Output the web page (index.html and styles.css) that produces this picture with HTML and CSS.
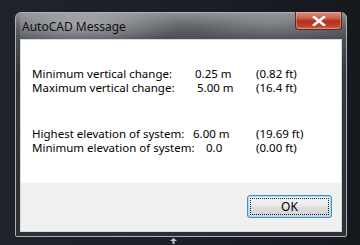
FILE: index.html
```html
<!DOCTYPE html>
<html lang="en">
    <head>
        <meta charset="UTF-8">
        <title>AutoCAD Message</title>
        <link rel="stylesheet" href="styles.css">
    </head>
    <body>
        <div class="window">
            <div class="titlebar">
                <span class="title">AutoCAD Message</span>
                <div class="close">
                    <svg width="14" height="10" viewBox="0 0 14 10">
                        <path d="M2 1 L12 9 M12 1 L2 9" stroke="#fff" stroke-width="2.6" stroke-linecap="square"/>
                    </svg>
                </div>
            </div>
            <div class="client">
                <div class="message">
                    <div class="group">
                        <span class="label">Minimum vertical change:</span><span class="value v1">0.25 m</span><span class="feet">(0.82 ft)</span>
                        <span class="label">Maximum vertical change:</span><span class="value v2">5.00 m</span><span class="feet">(16.4 ft)</span>
                    </div>
                    <div class="group second">
                        <span class="label">Highest elevation of system:</span><span class="value v3">6.00 m</span><span class="feet">(19.69 ft)</span>
                        <span class="label">Minimum elevation of system:</span><span class="value v4">0.0</span><span class="feet">(0.00 ft)</span>
                    </div>
                </div>
                <div class="buttons">
                    <button class="btn"><span class="focus">OK</span></button>
                </div>
            </div>
        </div>
        <div class="cursor">
            <svg width="7" height="6" viewBox="0 0 7 6"><path d="M3.5 0 L7 3 L4.5 3 L4.5 6 L2.5 6 L2.5 3 L0 3 Z" fill="#c8c8c8"/></svg>
        </div>
    </body>
</html>
```

FILE: styles.css
```css
body{
    margin: 0;
    width: 360px;
    height: 245px;
    overflow: hidden;
    background: linear-gradient(to right, #1f242b, #1a1e25 60%, #15181d);
    font-family: "Noto Sans", "Liberation Sans", sans-serif;
    font-size: 11.5px;
    color: #000;
    padding: 12px 0 0 15px;
    box-sizing: border-box;
}
.window{
    width: 332px;
    height: 225px;
    border-radius: 6px 6px 2px 2px;
    background: linear-gradient(to bottom, #8e9093 0, #5f6266 14px, #4a4d52 27px, #34373c 60px, #2c2f34 100%);
    border: 1px solid #aeb0b3;
    box-sizing: border-box;
    padding: 0 4px 4px 4px;
    display: flex;
    flex-direction: column;
}
.titlebar{
    height: 26px;
    display: flex;
    align-items: flex-start;
    justify-content: space-between;
    background: radial-gradient(ellipse 100px 22px at 60px 12px, rgba(205,207,210,0.6), rgba(205,207,210,0) 100%),
                radial-gradient(ellipse 80px 20px at 250px 10px, rgba(170,172,175,0.35), rgba(170,172,175,0) 100%);
}
.title{
    font-size: 12px;
    margin: 5px 0 0 2px;
    color: #111;
}
.close{
    width: 47px;
    height: 18px;
    margin-top: -1px;
    border: 1px solid #5a2a22;
    border-top: none;
    border-radius: 0 0 4px 4px;
    box-sizing: border-box;
    background: linear-gradient(to bottom, #d99484 0, #c9624e 35%, #b0321e 55%, #bf4630 85%, #d47458 100%);
    box-shadow: inset 0 0 0 1px rgba(255,200,190,0.35);
    display: flex;
    align-items: center;
    justify-content: center;
}
.client{
    flex: 1;
    border: 1px solid #d8d9db;
    background: #f0f0f0;
    display: flex;
    flex-direction: column;
}
.message{
    background: #fff;
    height: 143px;
    padding: 27px 0 0 11px;
    box-sizing: border-box;
}
.group{
    display: grid;
    grid-template-columns: 163px 61px auto;
    line-height: 14px;
}
.group.second{
    margin-top: 32px;
}
.value.v2{
    padding-left: 2px;
}
.value.v3{
    margin-left: -2px;
}
.value.v4{
    padding-left: 11px;
}
.buttons{
    flex: 1;
    display: flex;
    justify-content: flex-end;
    align-items: flex-start;
    padding: 12px 9px 0 0;
}
.btn{
    width: 85px;
    height: 23px;
    border: 1px solid #3d8fc4;
    border-radius: 3px;
    background: linear-gradient(to bottom, #f4f4f4 0, #ebebeb 45%, #dddddd 55%, #d2d2d2 100%);
    box-shadow: inset 0 0 0 1px #a8dcf2;
    padding: 2px;
    font-family: "Noto Sans", "Liberation Sans", sans-serif;
    font-size: 12px;
    color: #000;
}
.focus{
    display: block;
    height: 100%;
    border: 1px dotted #222;
    box-sizing: border-box;
    line-height: 15px;
}
.cursor{
    position: absolute;
    left: 170px;
    top: 238px;
    line-height: 0;
}
```
